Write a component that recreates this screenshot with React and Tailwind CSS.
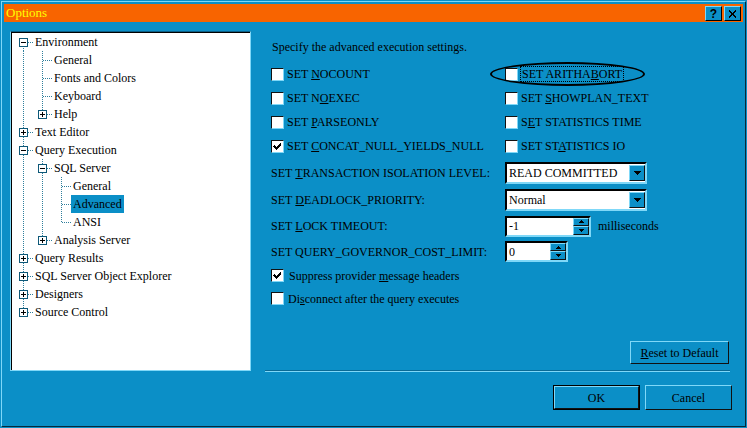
import React from 'react';

const LIGHT = '#7fd8f8';

function U({ children }) {
  return <span className="underline underline-offset-[1px] decoration-1">{children}</span>;
}

// tree cell: 19x18 drawing of the connector lines and the expander box
function Cell({ v, h, box }) {
  return (
    <svg width="19" height="18" className="shrink-0 block" shapeRendering="crispEdges">
      {v === 'full' && <line x1="9.5" y1="0" x2="9.5" y2="18" stroke="#2f7f9c" strokeDasharray="1 1" />}
      {v === 'top' && <line x1="9.5" y1="0" x2="9.5" y2="10" stroke="#2f7f9c" strokeDasharray="1 1" />}
      {v === 'bottom' && <line x1="9.5" y1="9" x2="9.5" y2="18" stroke="#2f7f9c" strokeDasharray="1 1" />}
      {h && <line x1="10" y1="9.5" x2="19" y2="9.5" stroke="#2f7f9c" strokeDasharray="1 1" />}
      {box && (
        <g>
          <rect x="5.5" y="5.5" width="8" height="8" fill="#fff" stroke="#0d5878" />
          <line x1="7" y1="9.5" x2="12" y2="9.5" stroke="#000" />
          {box === '+' && <line x1="9.5" y1="7" x2="9.5" y2="12" stroke="#000" />}
        </g>
      )}
    </svg>
  );
}

const tree = [
  { guides: [], self: 'bottom', box: '-', label: 'Environment' },
  { guides: ['full'], self: 'full', label: 'General' },
  { guides: ['full'], self: 'full', label: 'Fonts and Colors' },
  { guides: ['full'], self: 'full', label: 'Keyboard' },
  { guides: ['full'], self: 'top', box: '+', label: 'Help' },
  { guides: [], self: 'full', box: '+', label: 'Text Editor' },
  { guides: [], self: 'full', box: '-', label: 'Query Execution' },
  { guides: ['full'], self: 'full', box: '-', label: 'SQL Server' },
  { guides: ['full', 'full'], self: 'full', label: 'General' },
  { guides: ['full', 'full'], self: 'full', label: 'Advanced', selected: true },
  { guides: ['full', 'full'], self: 'top', label: 'ANSI' },
  { guides: ['full'], self: 'top', box: '+', label: 'Analysis Server' },
  { guides: [], self: 'full', box: '+', label: 'Query Results' },
  { guides: [], self: 'full', box: '+', label: 'SQL Server Object Explorer' },
  { guides: [], self: 'full', box: '+', label: 'Designers' },
  { guides: [], self: 'top', box: '+', label: 'Source Control' },
];

function Check({ checked, gap = 'ml-[3px]', children, focus }) {
  return (
    <div className="flex items-center h-full">
      <span className="w-[13px] h-[13px] bg-white border border-t-[#111] border-l-[#111] border-r-[#7fd8f8] border-b-[#7fd8f8] flex items-center justify-center shrink-0">
        {checked && (
          <svg width="9" height="9" shapeRendering="crispEdges">
            <polyline points="1,4 3.5,6.5 8,1.5" fill="none" stroke="#000" strokeWidth="2" />
          </svg>
        )}
      </span>
      <span className={gap + ' leading-[14px] ' + (focus ? 'outline outline-1 outline-dotted outline-black px-px -ml-px' : '')}>{children}</span>
    </div>
  );
}

function ArrowBtn({ h = 'h-[16px]', tiny }) {
  return (
    <div className={'w-[16px] ' + h + ' bg-[#0b8fc7] border border-t-[#7fd8f8] border-l-[#7fd8f8] border-r-[#111] border-b-[#111] flex items-center justify-center'}>
      {tiny ? (
        <svg width="5" height="3" shapeRendering="crispEdges"><polygon points={tiny === 'up' ? '2.5,0 5,3 0,3' : '0,0 5,0 2.5,3'} fill="#000" /></svg>
      ) : (
        <svg width="7" height="4" shapeRendering="crispEdges"><polygon points="0,0 7,0 3.5,4" fill="#000" /></svg>
      )}
    </div>
  );
}

function Combo({ value }) {
  return (
    <div className="w-[142px] h-[22px] bg-white border-2 border-t-black border-l-black border-r-[#7fd8f8] border-b-[#7fd8f8] flex items-center">
      <span className="flex-1 pl-[2px] leading-[14px]">{value}</span>
      <ArrowBtn />
    </div>
  );
}

function Spin({ w, value }) {
  return (
    <div className={w + ' h-[21px] bg-white border-2 border-t-black border-l-black border-r-[#7fd8f8] border-b-[#7fd8f8] flex items-center'}>
      <span className="flex-1 pl-[2px] leading-[14px]">{value}</span>
      <div className="flex flex-col">
        <ArrowBtn h="h-[8px]" tiny="up" />
        <ArrowBtn h="h-[9px]" tiny="down" />
      </div>
    </div>
  );
}

function Btn({ w, def, children }) {
  return (
    <div className={w + ' h-full ' + (def ? 'border border-black' : '')}>
      <div className="h-full border border-t-[#7fd8f8] border-l-[#7fd8f8] border-r-[#111] border-b-[#111] flex items-center justify-center">
        {children}
      </div>
    </div>
  );
}

export default function App() {
  return (
    <div className="w-[747px] h-[428px] bg-[#0b8fc7] p-px font-['Liberation_Serif','Times_New_Roman',serif] text-[12px] text-black overflow-hidden">
      <div className="h-full border border-t-[#7fd8f8] border-l-[#7fd8f8] border-r-[#06293a] border-b-[#06293a] p-[2px] flex flex-col">
        <header className="h-[18px] bg-[#f86400] flex items-center justify-between pl-[2px] pr-[2px] shrink-0">
          <span className="text-[#ffff00] text-[13px]">Options</span>
          <div className="flex gap-[2px] pt-px">
            <div className="w-[17px] h-[15px] bg-[#0b8fc7] border border-t-[#7fd8f8] border-l-[#7fd8f8] border-r-black border-b-black flex items-center justify-center font-['Liberation_Sans',Arial,sans-serif] font-bold text-[12px] leading-none">?</div>
            <div className="w-[17px] h-[15px] bg-[#0b8fc7] border border-t-[#7fd8f8] border-l-[#7fd8f8] border-r-black border-b-black flex items-center justify-center">
              <svg width="9" height="8" shapeRendering="crispEdges"><path d="M1 0.5 L8 7.5 M8 0.5 L1 7.5" stroke="#000" strokeWidth="2" /></svg>
            </div>
          </div>
        </header>

        <div className="flex-1 flex">
          <div className="ml-[6px] mt-[9px] w-[241px] h-[340px] border border-t-[#0a5f86] border-l-[#7fd8f8] border-r-[#7fd8f8] border-b-[#7fd8f8] shrink-0">
            <div className="h-full bg-white border-t border-l border-black pl-[2px]">
              {tree.map((r, i) => (
                <div key={i} className="flex items-center h-[18px]">
                  {r.guides.map((g, j) => <Cell key={j} v={g} />)}
                  <Cell v={r.self} h box={r.box} />
                  <span className={'px-[2px] leading-[18px] whitespace-nowrap ' + (r.selected ? 'bg-[#0b8fc7]' : '')}>{r.label}</span>
                </div>
              ))}
            </div>
          </div>

          <div className="flex-1 ml-[20px] flex flex-col">
            <div className="h-[24px] mt-[13px] flex items-center pl-px">Specify the advanced execution settings.</div>

            <div className="mt-[3px] grid grid-cols-[234px_1fr] auto-rows-[24px]">
              <Check><span>SET <U>N</U>OCOUNT</span></Check>
              <div className="relative">
                <Check focus><span>SET ARITHA<U>B</U>ORT</span></Check>
                <div className="absolute left-[-15px] top-0 w-[155px] h-[24px] rounded-[50%] border-2 border-black pointer-events-none" />
              </div>
              <Check><span>SET N<U>O</U>EXEC</span></Check>
              <Check><span>SET <U>S</U>HOWPLAN_TEXT</span></Check>
              <Check><span>SET <U>P</U>ARSEONLY</span></Check>
              <Check><span>S<U>E</U>T STATISTICS TIME</span></Check>
              <Check checked><span>SET <U>C</U>ONCAT_NULL_YIELDS_NULL</span></Check>
              <Check><span>SET ST<U>A</U>TISTICS IO</span></Check>
            </div>

            <div className="mt-[2px] grid grid-cols-[234px_1fr] grid-rows-[26px_27px_26px_25px]">
              <div className="flex items-center">SET <span className="ml-[3px]"><U>T</U>RANSACTION ISOLATION LEVEL:</span></div>
              <div className="flex items-center"><Combo value="READ COMMITTED" /></div>
              <div className="flex items-center">SET <span className="ml-[3px]"><U>D</U>EADLOCK_PRIORITY:</span></div>
              <div className="flex items-center"><Combo value="Normal" /></div>
              <div className="flex items-center">SET <span className="ml-[3px]"><U>L</U>OCK TIMEOUT:</span></div>
              <div className="flex items-center gap-[7px]"><Spin w="w-[86px]" value="-1" /><span>milliseconds</span></div>
              <div className="flex items-center">SET QUERY_GOVERNOR_COST_LIMIT:</div>
              <div className="flex items-center"><Spin w="w-[63px]" value="0" /></div>
            </div>

            <div className="h-[23px]"><Check checked gap="ml-[5px]"><span>Suppress provider <U>m</U>essage headers</span></Check></div>
            <div className="h-[23px]"><Check gap="ml-[4px]"><span>Di<U>s</U>connect after the query executes</span></Check></div>

            <div className="mt-auto flex flex-col">
              <div className="h-[23px] self-end mr-[14px]">
                <Btn w="w-[99px]"><span><U>R</U>eset to Default</span></Btn>
              </div>
              <div className="mt-[6px] -ml-[6px] mr-[13px] border-t border-[#0a6a95] border-b border-b-[#7fd8f8]" />
              <div className="mt-[13px] mb-[14px] h-[25px] flex justify-end gap-[5px] mr-[11px]">
                <Btn w="w-[87px]" def>OK</Btn>
                <Btn w="w-[87px]">Cancel</Btn>
              </div>
            </div>
          </div>
        </div>
      </div>
    </div>
  );
}
